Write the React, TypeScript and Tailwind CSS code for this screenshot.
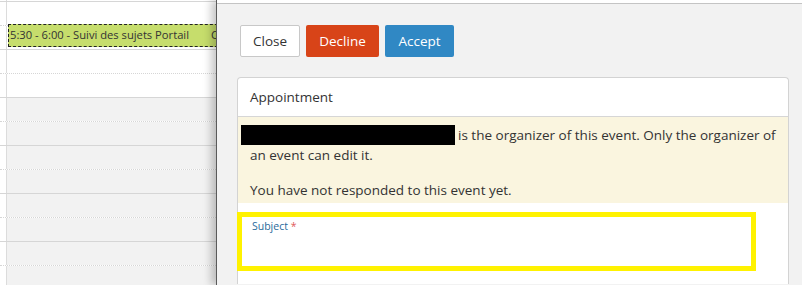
import React from "react";

const rows = [
  { style: "dotted", gray: false },
  { style: "solid", gray: false },
  { style: "dotted", gray: false },
  { style: "solid", gray: false },
  { style: "dotted", gray: true },
  { style: "solid", gray: true },
  { style: "dotted", gray: true },
  { style: "solid", gray: true },
  { style: "dotted", gray: true },
  { style: "solid", gray: true },
  { style: "dotted", gray: true },
  { style: "solid", gray: true },
];

export default function App() {
  return (
    <div
      className="flex w-[802px] h-[285px] overflow-hidden bg-white text-[#333]"
      style={{ fontFamily: '"Open Sans", "Noto Sans", sans-serif' }}
    >
      {/* Calendar */}
      <div className="relative w-[216px] flex-none flex flex-col">
        <div className="flex h-[2px] flex-none border-b border-[#d6d6d6]">
          <div className="w-[6px]" />
          <div className="flex-1 border-l border-[#dcdcdc]" />
        </div>
        {rows.map((r, i) => (
          <div
            key={i}
            className={`flex h-[24px] flex-none border-b border-[#d6d6d6] ${r.style === "dotted" ? "border-dotted" : "border-solid"}`}
          >
            <div className="w-[6px] bg-white" />
            <div className={`flex-1 border-l border-[#dcdcdc] ${r.gray ? "bg-[#f2f2f2]" : "bg-white"}`} />
          </div>
        ))}
        {/* Event */}
        <div className="absolute left-[8px] top-[24px] h-[23px] w-[220px] bg-[#c6dd6c] border border-dashed border-[#222] overflow-hidden">
          <div className="flex items-center h-[21px] text-[11.2px] whitespace-nowrap text-[#333] pl-[1px]">
            <span>5:30 - 6:00 - Suivi des sujets Portail</span>
            <span className="ml-[22px]">C</span>
          </div>
        </div>
      </div>

      {/* Panel */}
      <div className="relative z-10 flex-1 flex flex-col border-l border-[#5a5a5a] bg-[#f2f2f2] shadow-[-5px_0_8px_rgba(0,0,0,0.22)]">
        <div className="h-[3px] bg-white flex-none" />
        <div className="h-[1px] bg-[#c4c4c4] flex-none" />
        <div className="flex flex-col pl-[20px] pt-[21px]">
          {/* Buttons */}
          <div className="flex gap-[6px] ml-[3px] text-[13.5px]">
            <div className="w-[60px] h-[32px] flex items-center justify-center bg-white border border-[#c8c8c8] rounded-[2px] text-[#333]">
              Close
            </div>
            <div className="w-[73px] h-[32px] flex items-center justify-center bg-[#d84418] rounded-[2px] text-white">
              Decline
            </div>
            <div className="w-[69px] h-[32px] flex items-center justify-center bg-[#3088c4] rounded-[2px] text-white">
              Accept
            </div>
          </div>

          {/* Card */}
          <div className="mt-[20px] w-[552px] bg-white border border-b-0 border-[#d3d3d3] rounded-t-[4px]">
            <div className="h-[39px] flex items-center pl-[12px] text-[13.5px] border-b border-[#d6d6d6]">
              Appointment
            </div>
            <div className="bg-[#faf5df] pt-[8px] pb-[3px] pl-[12px] text-[13.5px] leading-[20px]">
              <div className="whitespace-nowrap flex items-center h-[20px]">
                <span className="inline-block ml-[-9px] w-[214px] h-[20px] bg-black" />
                <span className="ml-[3px]">is the organizer of this event. Only the organizer of</span>
              </div>
              <div className="whitespace-nowrap h-[20px]">an event can edit it.</div>
              <div className="whitespace-nowrap h-[20px] mt-[15px]">You have not responded to this event yet.</div>
            </div>
            <div className="pt-[9px] h-[81px]">
              <div className="ml-[-1px] w-[519px] h-[59px] border-[5px] border-[#fff200] pl-[10px] pt-[2px]">
                <div className="text-[10.5px] text-[#2a6a9b] leading-[14px]">
                  Subject <span className="text-[#e05a5a]">*</span>
                </div>
              </div>
            </div>
          </div>
        </div>
      </div>
    </div>
  );
}
